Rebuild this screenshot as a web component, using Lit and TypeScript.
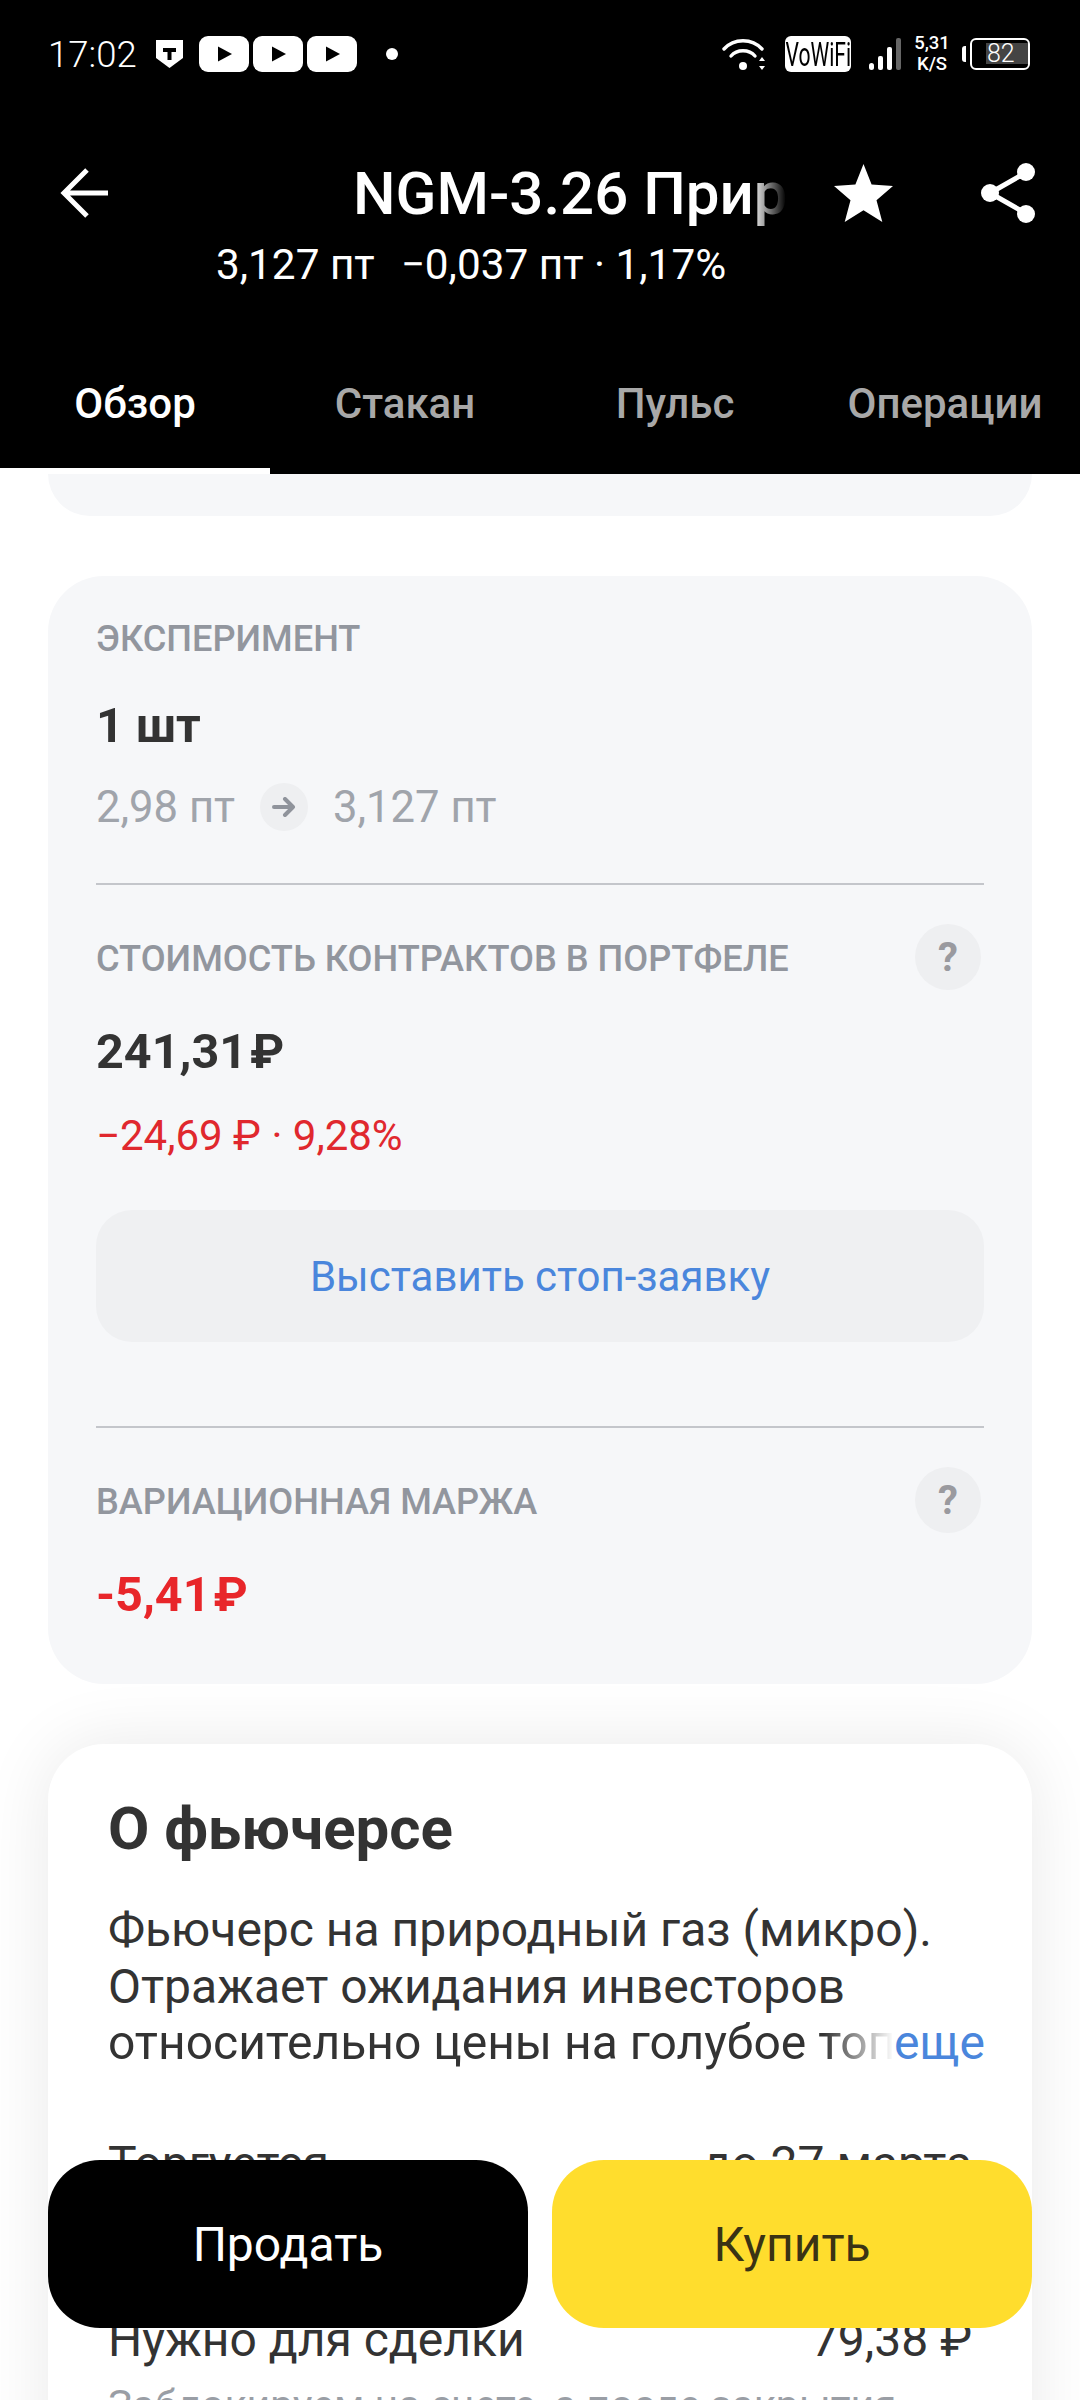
import { LitElement, html, css } from "lit";
import { customElement } from "lit/decorators.js";

const yt = () => html`<svg class="yt" viewBox="0 0 50 36" width="50" height="36"><rect x="0" y="0" width="50" height="36" rx="9" fill="#fff"/><path d="M19 10.5 L33 18 L19 25.5Z" fill="#000"/></svg>`;

@customElement("app-root")
export class AppRoot extends LitElement {
  static styles = css`
    :host { display: block; position: relative; width: 1080px; height: 2400px; overflow: hidden; background: #fff; font-family: Roboto, "Liberation Sans", sans-serif; color: #333; }
    * { box-sizing: border-box; }
    .header { background: #000; color: #fff; height: 474px; display: flex; flex-direction: column; }
    .status { height: 108px; display: flex; align-items: center; padding: 0 50px 0 48px; }
    .time { font-size: 36.5px; font-weight: 300; width: 107px; }
    .yts { display: flex; gap: 4px; margin-left: 15px; }
    .dot { width: 12px; height: 12px; border-radius: 50%; background: #fff; margin-left: 29px; }
    .right { margin-left: auto; display: flex; align-items: center; }
    .vowifi { width: 66px; height: 36px; border-radius: 6px; background: #fff; color: #000; font-size: 33px; font-weight: 400; display: flex; align-items: center; justify-content: center; margin-left: 19px; overflow: hidden; }
    .vowifi span { display: block; transform: scaleX(.64); white-space: nowrap; }
    .speed { width: 40px; margin-left: 11px; font-size: 18.5px; font-weight: 500; line-height: 21px; text-align: center; }
    .battery { position: relative; width: 60px; height: 32px; border: 2.5px solid #fff; border-radius: 6px; margin-left: 18px; padding: 3px; }
    .battery::before { content: ""; position: absolute; left: -10px; top: 6px; width: 4px; height: 16px; background: #fff; border-radius: 3px 0 0 3px; }
    .battery div { width: 42px; height: 21px; margin-left: 11px; background: #444; color: #fff; font-size: 25px; font-weight: 300; line-height: 21px; padding-left: 1px; }
    .titlebar { height: 90px; margin-top: 40px; display: flex; align-items: center; padding-left: 60px; }
    .title { width: 433px; margin-left: 245px; overflow: hidden; white-space: nowrap; font-size: 60px; font-weight: 500; -webkit-mask-image: linear-gradient(90deg, #000 92%, transparent 100%); mask-image: linear-gradient(90deg, #000 92%, transparent 100%); }
    .star { margin-left: 48px; }
    .share { margin-left: 88px; }
    .sub { height: 50px; margin-top: 2px; padding-left: 216px; display: flex; gap: 26px; font-size: 42.3px; line-height: 50px; white-space: nowrap; }
    .tabs { height: 138px; margin-top: 46px; display: flex; }
    .tab { width: 270px; display: flex; align-items: center; justify-content: center; font-size: 42px; font-weight: 500; color: #a8a8a8; padding-bottom: 4px; white-space: nowrap; }
    .tab.on { color: #fff; box-shadow: inset 0 -6px 0 #fff; }
    .stub { height: 42px; margin: 0 48px; background: #f6f7f9; border-radius: 0 0 56px 56px; }
    .card { margin: 60px 48px 0; padding: 31px 48px 59px; background: #f6f7f9; border-radius: 56px; }
    .label { height: 60px; display: flex; align-items: center; justify-content: space-between; font-size: 36.2px; font-weight: 500; color: #92969e; white-space: nowrap; }
    .label > .txt { padding-top: 3px; }
    .label.q { height: 66px; margin-top: 39px; padding-right: 3px; }
    .q-mark { width: 66px; height: 66px; border-radius: 50%; background: #eeeff1; color: #9a9a9f; font-size: 40px; font-weight: 700; display: flex; align-items: center; justify-content: center; }
    .big { height: 60px; margin-top: 29px; font-size: 48.5px; font-weight: 700; line-height: 60px; color: #333; }
    .big.b { margin-top: 32px; }
    .big.neg { margin-top: 32px; color: #e8262a; }
    .rub { margin-left: 3px; }
    .prices { height: 48px; margin-top: 27px; display: flex; align-items: center; font-size: 43.6px; color: #a0a4ab; white-space: nowrap; }
    .arrow { width: 48px; height: 48px; border-radius: 50%; background: #eeeff1; display: flex; align-items: center; justify-content: center; margin: 0 25px 0 25px; }
    .divider { height: 2px; background: #c4c6cb; }
    .d1 { margin-top: 52px; }
    .d2 { margin-top: 84px; }
    .delta { height: 48px; margin-top: 30px; font-size: 42px; line-height: 48px; color: #e0282e; white-space: nowrap; }
    .stop { height: 132px; margin-top: 50px; border-radius: 36px; background: #eff0f2; color: #4a86dc; font-size: 42px; display: flex; align-items: center; justify-content: center; }
    .about { margin: 60px 48px 0; padding: 50px 60px 0; background: #fff; border-radius: 56px 56px 0 0; box-shadow: 0 0 70px rgba(0,0,0,.09); height: 800px; }
    h2 { margin: 0; height: 70px; font-size: 60px; font-weight: 700; line-height: 70px; color: #333; white-space: nowrap; }
    .para { margin-top: 38px; font-size: 48px; line-height: 56.5px; color: #333; white-space: nowrap; }
    .last { display: flex; align-items: center; }
    .fade { flex: none; width: 786px; overflow: hidden; -webkit-mask-image: linear-gradient(90deg, #000 91%, transparent 100%); mask-image: linear-gradient(90deg, #000 91%, transparent 100%); }
    .more { flex: none; color: #4a86dc; }
    .row { height: 56px; display: flex; justify-content: space-between; font-size: 48px; line-height: 56px; color: #333; white-space: nowrap; }
    .r1 { margin-top: 64px; }
    .r2 { margin-top: 120px; }
    .note { margin-top: 12px; font-size: 41px; line-height: 50px; color: #9a9ea5; white-space: nowrap; }
    .actions { position: absolute; left: 48px; right: 48px; top: 2160px; display: flex; gap: 24px; }
    .btn { flex: 1; height: 168px; border-radius: 52px; display: flex; align-items: center; justify-content: center; font-size: 48px; }
    .sell { background: #000; color: #fff; }
    .buy { background: #ffdd2d; color: #3a3314; }
  `;

  render() {
    return html`
      <div class="header">
        <div class="status">
          <div class="time">17:02</div>
          <svg width="29" height="30" viewBox="0 0 29 30"><path d="M1 1H28V19L14.5 29L1 19Z" fill="#fff"/><path d="M8 9H21V13H16.5V21H12.5V13H8Z" fill="#000"/></svg>
          <div class="yts">${yt()}${yt()}${yt()}</div>
          <div class="dot"></div>
          <div class="right">
            <svg width="44" height="36" viewBox="0 0 44 36" fill="none" stroke="#fff" stroke-linecap="round">
              <path d="M2 13C12 2 30 2 40 13" stroke-width="3.4"/>
              <path d="M9 20C15 13 27 13 33 20" stroke-width="3.4"/>
              <circle cx="21" cy="30" r="4" fill="#fff" stroke="none"/>
              <path d="M37 25l3-4 3 4ZM37 30l3 4 3-4Z" fill="#fff" stroke="none"/>
            </svg>
            <div class="vowifi"><span>VoWiFi</span></div>
            <svg style="margin-left:18px" width="32" height="34" viewBox="0 0 32 34"><rect x="0" y="26" width="5" height="7" rx="2.5" fill="#fff"/><rect x="9" y="19" width="5" height="14" rx="2" fill="#fff"/><rect x="18" y="10" width="5" height="23" rx="2" fill="#fff"/><rect x="27" y="1" width="5" height="32" rx="2" fill="#666"/></svg>
            <div class="speed">5,31<br />K/S</div>
            <div class="battery"><div>82</div></div>
          </div>
        </div>
        <div class="titlebar">
          <svg width="48" height="50" viewBox="0 0 48 50" fill="none" stroke="#fff" stroke-width="5"><path d="M48 25H4M27 2L4 25L27 48"/></svg>
          <div class="title">NGM-3.26 Природный газ</div>
          <svg class="star" width="59" height="58" viewBox="0 0 59 58"><path d="M29.5 0L37.6 20.4L59 22L42.5 36.2L48.3 58L29.5 46.3L10.7 58L16.5 36.2L0 22L21.4 20.4Z" fill="#fff"/></svg>
          <svg class="share" width="54" height="60" viewBox="0 0 54 60"><path d="M45 9.5L9 30L45 50.5" fill="none" stroke="#fff" stroke-width="5"/><circle cx="45" cy="9" r="9" fill="#fff"/><circle cx="9" cy="30" r="9" fill="#fff"/><circle cx="45" cy="51" r="9" fill="#fff"/></svg>
        </div>
        <div class="sub"><span>3,127 пт</span><span>−0,037 пт · 1,17%</span></div>
        <div class="tabs">
          <div class="tab on">Обзор</div><div class="tab">Стакан</div><div class="tab">Пульс</div><div class="tab">Операции</div>
        </div>
      </div>
      <div class="stub"></div>
      <div class="card">
        <div class="label"><span class="txt">ЭКСПЕРИМЕНТ</span></div>
        <div class="big">1 шт</div>
        <div class="prices"><span>2,98 пт</span><span class="arrow"><svg width="24" height="20" viewBox="0 0 24 20" fill="none" stroke="#8f939b" stroke-width="4" stroke-linecap="round" stroke-linejoin="round"><path d="M2 10H21M13 2L21 10L13 18"/></svg></span><span>3,127 пт</span></div>
        <div class="divider d1"></div>
        <div class="label q"><span class="txt">СТОИМОСТЬ КОНТРАКТОВ В ПОРТФЕЛЕ</span><span class="q-mark">?</span></div>
        <div class="big b">241,31<span class="rub">₽</span></div>
        <div class="delta">−24,69 ₽ · 9,28%</div>
        <div class="stop">Выставить стоп-заявку</div>
        <div class="divider d2"></div>
        <div class="label q"><span class="txt">ВАРИАЦИОННАЯ МАРЖА</span><span class="q-mark">?</span></div>
        <div class="big neg">-5,41<span class="rub">₽</span></div>
      </div>
      <div class="about">
        <h2>О фьючерсе</h2>
        <div class="para">
          <div>Фьючерс на природный газ (микро).</div>
          <div>Отражает ожидания инвесторов</div>
          <div class="last"><div class="fade">относительно цены на голубое топливо.</div><span class="more">еще</span></div>
        </div>
        <div class="row r1"><span>Торгуется</span><span>до 27 марта</span></div>
        <div class="row r2"><span>Нужно для сделки</span><span>79,38 ₽</span></div>
        <div class="note">Заблокируем на счете, а после закрытия</div>
      </div>
      <div class="actions">
        <div class="btn sell">Продать</div>
        <div class="btn buy">Купить</div>
      </div>
    `;
  }
}
